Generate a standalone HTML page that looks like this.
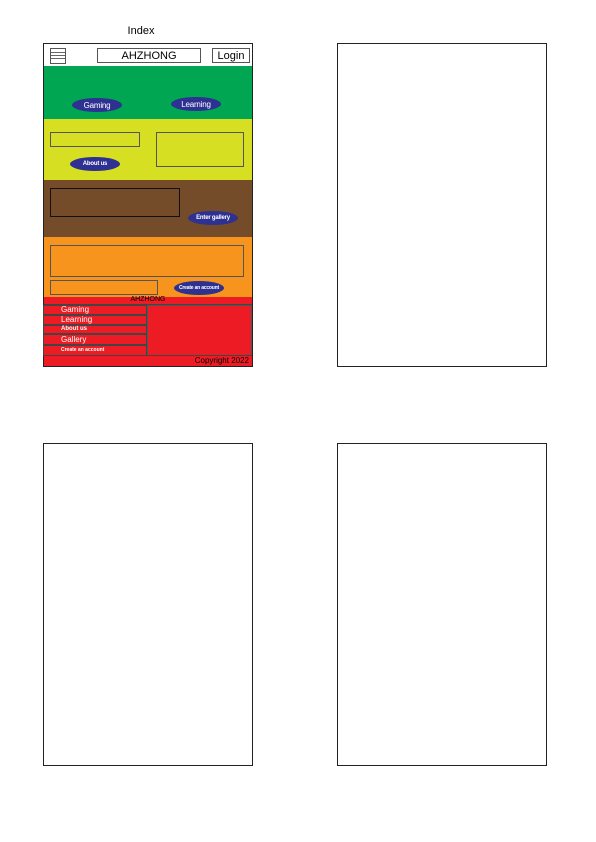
<!DOCTYPE html>
<html><head><meta charset="utf-8"><style>
body{margin:0;width:596px;height:842px;background:#fff;position:relative;overflow:hidden;font-family:"Liberation Sans",sans-serif}
div{position:absolute;box-sizing:border-box}
.f{border:1px solid #222;background:#fff}
.b{border:1px solid #555}
.e{background:#2e3192;border-radius:50%;color:#fff;font-size:8px;text-align:center;line-height:15px;height:14px;width:50px;letter-spacing:-0.2px}
.n{left:43px;width:104px;border:1px solid #444;color:#fff;font-size:8px;padding-left:17px}
</style></head><body>
<div style="left:100px;top:25px;width:82px;text-align:center;font-size:11px">Index</div>

<div class="f" style="left:43px;top:43px;width:210px;height:324px"></div>
<div class="f" style="left:337px;top:43px;width:210px;height:324px"></div>
<div class="f" style="left:43px;top:443px;width:210px;height:323px"></div>
<div class="f" style="left:337px;top:443px;width:210px;height:323px"></div>

<div class="b" style="left:50px;top:48px;width:16px;height:16px;background:linear-gradient(#fff 3px,#666 3px,#666 4px,#fff 4px,#fff 6px,#666 6px,#666 7px,#fff 7px,#fff 9px,#666 9px,#666 10px,#fff 10px)"></div>
<div class="b" style="left:97px;top:48px;width:104px;height:15px;font-size:11px;text-align:center;line-height:15px">AHZHONG</div>
<div class="b" style="left:212px;top:48px;width:38px;height:15px;font-size:11px;text-align:center;line-height:15px">Login</div>

<div style="left:44px;top:66px;width:208px;height:53px;background:#00a651"></div>
<div class="e" style="left:72px;top:98px">Gaming</div>
<div class="e" style="left:171px;top:97px">Learning</div>

<div style="left:44px;top:119px;width:208px;height:61px;background:#d7df23"></div>
<div class="b" style="left:50px;top:132px;width:90px;height:15px"></div>
<div class="b" style="left:156px;top:132px;width:88px;height:35px"></div>
<div class="e" style="left:70px;top:157px;font-size:6px;font-weight:bold">About us</div>

<div style="left:44px;top:180px;width:208px;height:57px;background:#754c29"></div>
<div style="left:50px;top:188px;width:130px;height:29px;border:1px solid #111"></div>
<div class="e" style="left:188px;top:211px;font-size:6px;font-weight:bold">Enter gallery</div>

<div style="left:44px;top:237px;width:208px;height:60px;background:#f7941d"></div>
<div class="b" style="left:50px;top:245px;width:194px;height:32px"></div>
<div class="b" style="left:50px;top:280px;width:108px;height:15px"></div>
<div class="e" style="left:174px;top:281px;font-size:5px;font-weight:bold">Create an account</div>

<div style="left:44px;top:297px;width:208px;height:69px;background:#ed1c24"></div>
<div style="left:44px;top:296px;width:208px;height:9px;border-bottom:1px solid #444;font-size:7px;text-align:center;line-height:8px">AHZHONG</div>
<div class="n" style="top:305px;height:10px;line-height:8px">Gaming</div>
<div class="n" style="top:315px;height:10px;line-height:8px">Learning</div>
<div class="n" style="top:325px;height:9px;line-height:7px;font-size:6px;font-weight:bold">About us</div>
<div class="n" style="top:334px;height:11px;line-height:9px">Gallery</div>
<div class="n" style="top:345px;height:11px;line-height:9px;font-size:5px;font-weight:bold">Create an account</div>
<div style="left:147px;top:305px;width:105px;height:51px;border:1px solid #555"></div>
<div style="left:44px;top:355px;width:208px;height:11px;border-top:1px solid #444;font-size:8px;text-align:right;padding-right:3px;line-height:10px">Copyright 2022</div>
</body></html>
